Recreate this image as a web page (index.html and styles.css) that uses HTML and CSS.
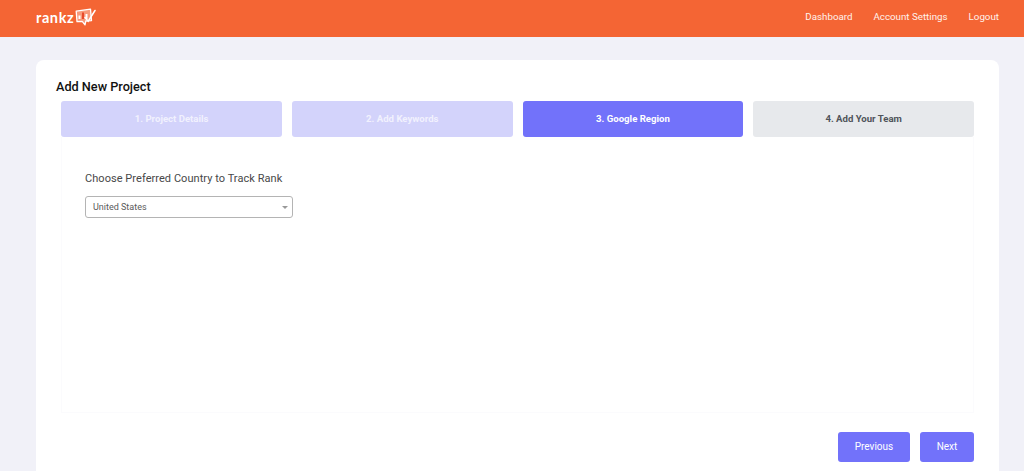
FILE: index.html
```html
<!DOCTYPE html>
<html lang="en">
<head>
<meta charset="utf-8">
<title>Add New Project</title>
<link rel="stylesheet" href="styles.css">
</head>
<body>
<header class="topbar">
  <a class="logo" href="#">
    <span class="logo-text">rankz</span>
    <svg class="logo-icon" width="21" height="18" viewBox="0 0 21 18" fill="none">
      <path d="M1.2 3.2 L15.5 1.2 L16.5 12.6 L10.8 13 L10 16.8 L7.2 13.3 L2 13.6 Z" fill="#fff" fill-opacity="0.35" stroke="#fff" stroke-width="1.3" stroke-linejoin="round"/>
      <path d="M4.5 11 V7.5" stroke="#fff" stroke-width="2"/>
      <path d="M8 11 V4.5" stroke="#e8492a" stroke-width="2"/>
      <path d="M11.5 11 V6" stroke="#fff" stroke-width="2"/>
      <path d="M10 9.5 L13.2 13.2 L20 2.5" stroke="#fff" stroke-width="1.5" stroke-linecap="round"/>
    </svg>
  </a>
  <nav class="nav">
    <a href="#">Dashboard</a>
    <a href="#">Account Settings</a>
    <a href="#">Logout</a>
  </nav>
</header>
<main class="card">
  <h1 class="title">Add New Project</h1>
  <div class="wizard">
    <ol class="steps">
      <li class="step step-done">1. Project Details</li>
      <li class="step step-done">2. Add Keywords</li>
      <li class="step step-current">3. Google Region</li>
      <li class="step step-todo">4. Add Your Team</li>
    </ol>
    <section class="panel">
      <label class="field-label" for="country">Choose Preferred Country to Track Rank</label>
      <div class="select-wrap">
        <select class="select" id="country">
          <option>United States</option>
        </select>
      </div>
    </section>
    <div class="actions">
      <button class="btn btn-prev" type="button">Previous</button>
      <button class="btn btn-next" type="button">Next</button>
    </div>
  </div>
</main>
</body>
</html>
```
FILE: styles.css
```css
* { box-sizing: border-box; }
html, body { height: 471px; overflow: hidden; }
body {
  margin: 0;
  background: #f1f1f8;
  font-family: Roboto, "Liberation Sans", sans-serif;
  color: #212529;
}
a { text-decoration: none; color: inherit; }

.topbar {
  height: 37px;
  background: #f46534;
  display: flex;
  align-items: center;
  justify-content: space-between;
  padding: 0 25px 0 36px;
}
.logo { display: flex; align-items: center; gap: 1px; color: #fff; margin-top: -2px; }
.logo-text {
  font-family: Lato, Roboto, sans-serif;
  font-size: 14.5px;
  font-weight: 700;
  letter-spacing: 0.6px;
  line-height: 20px;
}
.logo-icon { display: block; margin-top: -1px; }
.nav { display: flex; gap: 21px; font-size: 9.75px; color: #fff2ec; margin-top: -5px; }

.card {
  margin: 23px 25px 0 36px;
  height: 420px;
  background: #fff;
  border-radius: 8px;
  padding: 19px 25px 0 20px;
}
.title {
  margin: 0;
  font-size: 12.7px;
  font-weight: 500;
  line-height: 16px;
  color: #111;
}
.wizard { margin: 6px 0 0 5.3px; }
.steps {
  list-style: none;
  margin: 0;
  padding: 0;
  display: grid;
  grid-template-columns: repeat(4, 1fr);
  gap: 10px;
}
.step {
  height: 36px;
  padding-bottom: 1px;
  border-radius: 3px;
  display: flex;
  align-items: center;
  justify-content: center;
  font-size: 9.6px;
  font-weight: 700;
  color: #fff;
}
.step-done { background: #d3d3fb; color: #f1f1fe; }
.step-current { background: #7272fa; }
.step-todo { background: #e7e9ec; color: #50545a; }

.panel {
  height: 276px;
  border: 1px solid #fbfbfd;
  border-top: 0;
  padding: 35px 22.7px 0;
}
.field-label {
  display: block;
  font-size: 11px;
  line-height: 14px;
  letter-spacing: 0.05px;
  color: #484848;
}
.select-wrap { position: relative; width: 208px; margin-top: 10px; }
.select-wrap::after {
  content: "";
  position: absolute;
  right: 5px;
  top: 9.5px;
  border-left: 3px solid transparent;
  border-right: 3px solid transparent;
  border-top: 3px solid #999;
}
.select {
  display: block;
  width: 100%;
  height: 22px;
  appearance: none;
  background: #fff;
  border: 1px solid #b4b4b4;
  border-radius: 3px;
  padding: 0 7px;
  font-family: inherit;
  font-size: 9px;
  color: #5a5a5a;
}

.actions {
  display: flex;
  justify-content: flex-end;
  gap: 10px;
  margin-top: 19px;
}
.btn {
  height: 30px;
  padding: 0 0 1px;
  border: 0;
  border-radius: 3px;
  background: #7272fa;
  color: #fff;
  font-family: inherit;
  font-size: 10px;
  font-weight: 400;
}
.btn-prev { width: 72px; }
.btn-next { width: 54px; }
```
